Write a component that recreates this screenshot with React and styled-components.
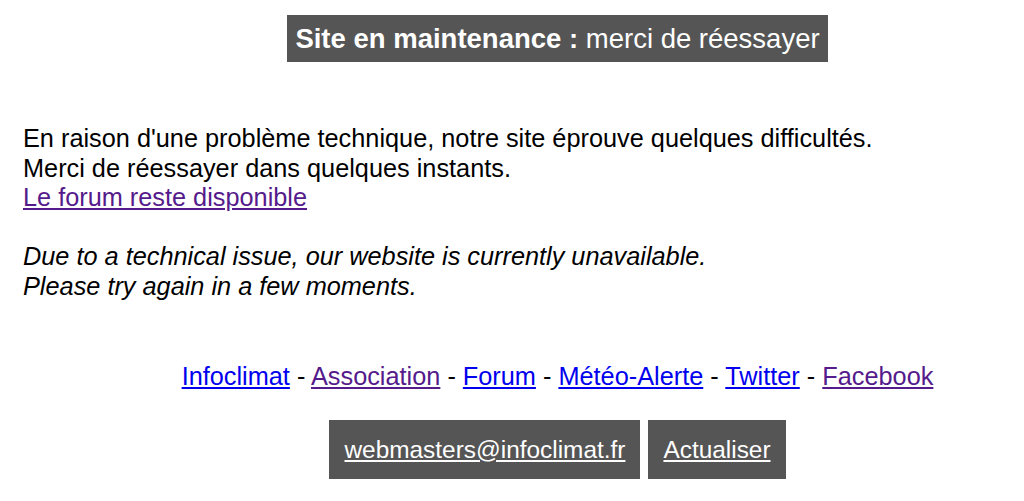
import React from 'react';
import styled, { createGlobalStyle } from 'styled-components';

const GlobalStyle = createGlobalStyle`
  html, body {
    margin: 0;
    padding: 0;
    background: #fff;
  }
  body {
    font-family: "Liberation Sans", Arial, Helvetica, sans-serif;
    color: #000;
  }
`;

const Page = styled.div`
  display: flex;
  flex-direction: column;
  padding: 15px 0 0;
`;

const Centered = styled.div`
  display: flex;
  justify-content: center;
  gap: ${p => p.gap || 0}px;
  padding-left: 91px;
  margin-top: ${p => p.top || 0}px;
`;

const Banner = styled.h1`
  margin: 0;
  background: #555;
  color: #fff;
  font-size: 27.5px;
  font-weight: normal;
  line-height: 47px;
  padding: 0 8px;
  white-space: nowrap;

  strong {
    font-weight: bold;
  }
`;

const Message = styled.div`
  padding-left: 23px;
  margin-top: 62px;
  font-size: 25.3px;
  line-height: 29.6px;
`;

const Italic = styled.p`
  margin: 29.6px 0 0;
  font-style: italic;
`;

const Line = styled.div`
  white-space: nowrap;
`;

const Link = styled.a`
  color: ${p => (p.visited ? '#551a8b' : '#0000ee')};
  text-decoration: underline;
`;

const LinkRow = styled.div`
  font-size: 25.3px;
  line-height: 30px;
  white-space: nowrap;
`;

const ButtonLink = styled.a`
  display: block;
  background: #555;
  color: #fff;
  font-size: 24.4px;
  line-height: 59px;
  padding: 0 15px;
  text-decoration: underline;
  white-space: nowrap;
`;

const links = [
  { label: 'Infoclimat', visited: false },
  { label: 'Association', visited: true },
  { label: 'Forum', visited: false },
  { label: 'Météo-Alerte', visited: false },
  { label: 'Twitter', visited: false },
  { label: 'Facebook', visited: true },
];

const App = () => (
  <Page>
    <GlobalStyle />
    <Centered>
      <Banner>
        <strong>Site en maintenance :</strong> merci de réessayer
      </Banner>
    </Centered>

    <Message>
      <Line>En raison d'une problème technique, notre site éprouve quelques difficultés.</Line>
      <Line>Merci de réessayer dans quelques instants.</Line>
      <Line>
        <Link href="#" visited>Le forum reste disponible</Link>
      </Line>
      <Italic>
        Due to a technical issue, our website is currently unavailable.
        <br />
        Please try again in a few moments.
      </Italic>
    </Message>

    <Centered top={59}>
      <LinkRow>
        {links.map((l, i) => (
          <React.Fragment key={l.label}>
            {i > 0 && ' - '}
            <Link href="#" visited={l.visited}>{l.label}</Link>
          </React.Fragment>
        ))}
      </LinkRow>
    </Centered>

    <Centered top={29} gap={8}>
      <ButtonLink href="#">webmasters@infoclimat.fr</ButtonLink>
      <ButtonLink href="#">Actualiser</ButtonLink>
    </Centered>
  </Page>
);

export default App;
